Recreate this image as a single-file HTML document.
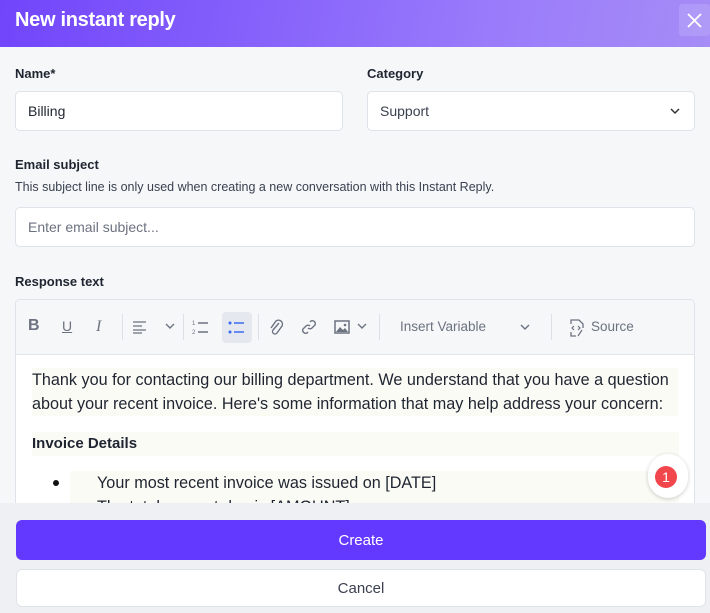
<!DOCTYPE html>
<html><head><meta charset="utf-8"><style>
*{box-sizing:border-box;margin:0;padding:0}
body{width:710px;height:613px;overflow:hidden;background:#f6f7f9;font-family:"Liberation Sans",sans-serif;position:relative;color:#1f2530}
.hdr{position:absolute;left:0;top:0;width:710px;height:47px;background:linear-gradient(100deg,#7145fb 0%,#9a7cfb 70%,#a58cf6 100%)}
.hdr h1{position:absolute;left:15px;top:9px;font-size:20px;font-weight:bold;color:#fff;letter-spacing:-0.3px}
.x{position:absolute;left:679px;top:4px;width:31px;height:32px;background:rgba(255,255,255,.13);border-radius:3px}
.lbl{position:absolute;font-size:13px;font-weight:bold;color:#1f2530}
.inp{position:absolute;background:#fff;border:1px solid #dfe2e8;border-radius:5px;font-size:14px;padding-left:12px;display:flex;align-items:center}
.help{position:absolute;left:15px;top:180px;font-size:12.5px;color:#3a4150}
.ed{position:absolute;left:15px;top:299px;width:680px;height:220px;border:1px solid #dfe2e8;border-radius:5px;background:#fff;overflow:hidden}
.tb{height:55px;background:#f6f7f9;border-bottom:1px solid #e2e5ea;position:relative;color:#6b7280}
.tb span{position:absolute;top:18px;font-size:14px}
.sep{position:absolute;top:14px;width:1px;height:26px;background:#dde0e5}
.ct{padding:13px 16px 0 16px;font-size:16.2px;line-height:24px;color:#1f2530}
.ft{position:absolute;left:0;top:503px;width:710px;height:110px;background:#eef0f4}
.btn{position:absolute;left:16px;width:690px;border-radius:6px;display:flex;align-items:center;justify-content:center;font-size:15px}
</style></head><body>
<div class="hdr"><h1>New instant reply</h1>
<div class="x"><svg width="31" height="32"><path d="M9 10L22 23M22 10L9 23" stroke="#fff" stroke-width="1.8"/></svg></div></div>
<div class="lbl" style="left:15px;top:66px">Name*</div>
<div class="lbl" style="left:367px;top:66px">Category</div>
<div class="inp" style="left:15px;top:91px;width:328px;height:40px">Billing</div>
<div class="inp" style="left:367px;top:91px;width:328px;height:40px;color:#3a4150">Support
<svg style="position:absolute;right:14px;top:15px" width="10" height="8"><path d="M1 2L5 6L9 2" stroke="#333" stroke-width="1.5" fill="none"/></svg></div>
<div class="lbl" style="left:15px;top:157px">Email subject</div>
<div class="help">This subject line is only used when creating a new conversation with this Instant Reply.</div>
<div class="inp" style="left:15px;top:207px;width:680px;height:40px;color:#6b7280">Enter email subject...</div>
<div class="lbl" style="left:15px;top:274px">Response text</div>
<div class="ed">
<div class="tb">
<span style="left:12px;font-weight:bold;font-size:16px;top:17px">B</span>
<span style="left:46px;text-decoration:underline">U</span>
<span style="left:80px;font-style:italic;font-family:'Liberation Serif',serif;font-size:16px">I</span>
<div class="sep" style="left:106px"></div>
<svg style="position:absolute;left:116px;top:20px" width="50" height="14"><path d="M1 2H14M1 6H10M1 10H14M1 13H10" stroke="#6b7280" stroke-width="1.3"/><path d="M34 4L38 8L42 4" stroke="#6b7280" stroke-width="1.4" fill="none"/></svg>
<div class="sep" style="left:167px"></div>
<svg style="position:absolute;left:176px;top:18px" width="18" height="18"><text x="0" y="7" font-size="6" fill="#6b7280">1</text><text x="0" y="16" font-size="6" fill="#6b7280">2</text><path d="M6 5H16M6 14H16" stroke="#6b7280" stroke-width="1.4"/></svg>
<div style="position:absolute;left:206px;top:12px;width:30px;height:31px;background:#e5e8ee;border-radius:4px"><svg width="30" height="31"><circle cx="8" cy="11" r="1.5" fill="#3b6cf0"/><circle cx="8" cy="20" r="1.5" fill="#3b6cf0"/><path d="M12 11H22M12 20H22" stroke="#3b6cf0" stroke-width="1.6"/></svg></div>
<div class="sep" style="left:242px"></div>
<svg style="position:absolute;left:251px;top:18px" width="18" height="18"><path d="M12 5L6 12a2.5 2.5 0 0 0 4 3L15 8a4 4 0 0 0-6-5L4 10" stroke="#6b7280" stroke-width="1.4" fill="none"/></svg>
<svg style="position:absolute;left:284px;top:18px" width="18" height="18"><path d="M8 10a3 3 0 0 0 4 0l3-3a3 3 0 0 0-4-4l-1 1M10 8a3 3 0 0 0-4 0l-3 3a3 3 0 0 0 4 4l1-1" stroke="#6b7280" stroke-width="1.4" fill="none"/></svg>
<svg style="position:absolute;left:318px;top:19px" width="40" height="16"><rect x="1" y="2" width="14" height="12" fill="none" stroke="#6b7280" stroke-width="1.5"/><path d="M2 13L6 8L9 11L11 9L14 13Z" fill="#6b7280"/><circle cx="11" cy="6" r="1.3" fill="#6b7280"/><path d="M24 5L28 9L32 5" stroke="#6b7280" stroke-width="1.4" fill="none"/></svg>
<div class="sep" style="left:363px"></div>
<span style="left:384px;font-size:13.5px;top:19px">Insert Variable</span>
<svg style="position:absolute;left:504px;top:23px" width="10" height="8"><path d="M1 2L5 6L9 2" stroke="#6b7280" stroke-width="1.4" fill="none"/></svg>
<div class="sep" style="left:535px"></div>
<svg style="position:absolute;left:552px;top:18px" width="18" height="20"><path d="M3 6V2H11L15 6V10M3 14V18H8" stroke="#6b7280" stroke-width="1.3" fill="none"/><path d="M6 8L4 10L6 12M10 8L12 10L10 12M14 12L10 18" stroke="#6b7280" stroke-width="1.2" fill="none"/></svg>
<span style="left:575px;font-size:13.5px;top:19px">Source</span>
</div>
<div class="ct">
<div style="background:#fbfbf6">Thank you for contacting our billing department. We understand that you have a question about your recent invoice. Here's some information that may help address your concern:</div>
<div style="background:#fbfbf6;margin-top:16px;height:24px;font-weight:bold;font-size:15px;width:647px">Invoice Details</div>
<div style="position:relative;margin-top:15px;margin-left:38px;background:#fbfbf6;padding-left:27px;width:609px">Your most recent invoice was issued on [DATE]<br>The total amount due is [AMOUNT]
<div style="position:absolute;left:-17px;top:9px;width:6px;height:6px;border-radius:3px;background:#111"></div></div>
</div>
</div>
<div style="position:absolute;left:648px;top:454px;width:40px;height:44px;border-radius:20px;background:#fff;box-shadow:0 1px 4px rgba(0,0,0,.2)"><div style="position:absolute;left:7px;top:12px;width:22px;height:22px;border-radius:11px;background:#f0464c;color:#fff;font-size:14px;text-align:center;line-height:22px">1</div></div>
<div class="ft"></div>
<div class="btn" style="top:520px;height:40px;background:#6439ff;color:#fff">Create</div>
<div class="btn" style="top:569px;height:38px;background:#fff;border:1px solid #e0e3e8;color:#3a4150">Cancel</div>
</body></html>
